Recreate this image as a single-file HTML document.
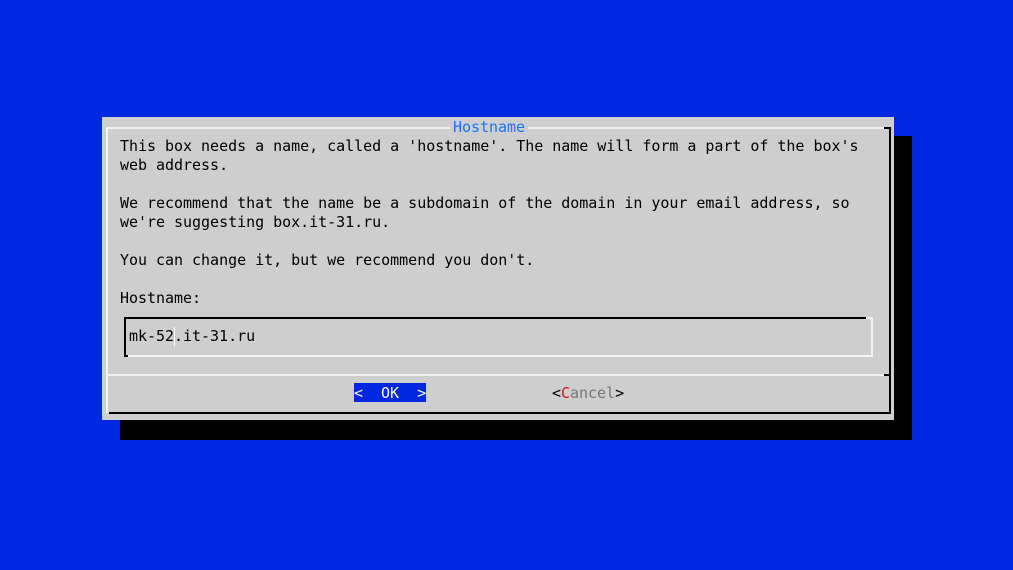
<!DOCTYPE html>
<html><head><meta charset="utf-8"><style>
html,body{margin:0;padding:0;}
body{width:1013px;height:570px;background:#0028e0;position:relative;overflow:hidden;font-family:"DejaVu Sans Mono","Liberation Mono",monospace;font-size:15px;letter-spacing:-0.025px;}
.a{position:absolute;}
.t{position:absolute;left:120px;white-space:pre;color:#000;line-height:19px;}
</style></head><body>
<div class="a" style="left:894px;top:136px;width:18px;height:304px;background:#000"></div>
<div class="a" style="left:120px;top:420px;width:792px;height:20px;background:#000"></div>
<div class="a" style="left:102px;top:117px;width:792px;height:303px;background:#cecece"></div>
<div class="a" style="left:106px;top:127px;width:778px;height:2px;background:#f2f2f2"></div>
<div class="a" style="left:884px;top:127px;width:6px;height:2px;background:#000"></div>
<div class="a" style="left:106px;top:127px;width:2px;height:286px;background:#f2f2f2"></div>
<div class="a" style="left:889px;top:127px;width:2px;height:287px;background:#000"></div>
<div class="a" style="left:109px;top:412px;width:782px;height:2px;background:#000"></div>
<div class="a" style="left:108px;top:374px;width:776px;height:2px;background:#f2f2f2"></div>
<div class="a" style="left:884px;top:374px;width:6px;height:2px;background:#000"></div>
<div class="a" style="left:450px;top:118px;line-height:19px;padding:0 3px;background:#cecece;color:#1a73ff;white-space:pre">Hostname</div>
<div class="t" style="top:137px">This box needs a name, called a 'hostname'. The name will form a part of the box's</div>
<div class="t" style="top:156px">web address.</div>
<div class="t" style="top:194px">We recommend that the name be a subdomain of the domain in your email address, so</div>
<div class="t" style="top:213px">we're suggesting box.it-31.ru.</div>
<div class="t" style="top:251px">You can change it, but we recommend you don't.</div>
<div class="t" style="top:289px">Hostname:</div>
<div class="a" style="left:124px;top:317px;width:742px;height:2px;background:#000"></div>
<div class="a" style="left:866px;top:317px;width:6px;height:2px;background:#f2f2f2"></div>
<div class="a" style="left:871px;top:317px;width:2px;height:40px;background:#f2f2f2"></div>
<div class="a" style="left:124px;top:317px;width:2px;height:40px;background:#000"></div>
<div class="a" style="left:124px;top:355px;width:4px;height:2px;background:#000"></div>
<div class="a" style="left:128px;top:355px;width:745px;height:2px;background:#f2f2f2"></div>
<div class="t" style="left:129px;top:327px">mk-52.it-31.ru</div>
<div class="a" style="left:174px;top:327px;width:1px;height:19px;background:#fff"></div>
<div class="a" style="left:354px;top:383px;width:72px;height:19px;background:#0028e0;color:#fff;line-height:20px;white-space:pre">&lt;  <span style="color:#fff">O</span><span style="color:#ffffa0">K</span>  &gt;</div>
<div class="a" style="left:552px;top:384px;line-height:19px;white-space:pre;color:#000">&lt;<span style="color:#e01010">C</span><span style="color:#777">ancel</span>&gt;</div>
</body></html>
